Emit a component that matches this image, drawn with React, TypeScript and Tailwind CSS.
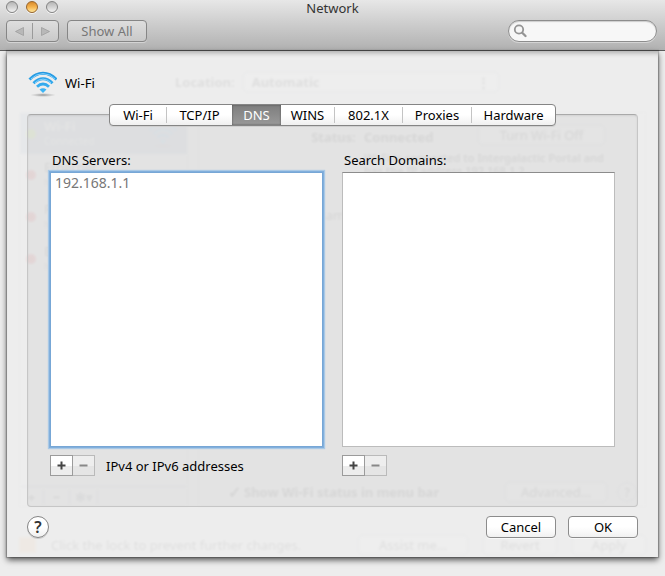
import { useState } from "react";

const tabs = [
  { name: "Wi-Fi", width: "w-[57px]" },
  { name: "TCP/IP", width: "w-[65px]" },
  { name: "DNS", width: "w-[49px]" },
  { name: "WINS", width: "w-[54px]" },
  { name: "802.1X", width: "w-[68px]" },
  { name: "Proxies", width: "w-[69px]" },
  { name: "Hardware", width: "w-[83px]" },
];

const pushButton =
  "flex h-[22px] items-center justify-center rounded border border-[#8c8c8c] bg-linear-to-b from-white from-50% to-[#f1f1f1] shadow-[0_1px_0_#f8f8f8]";

function TrafficLight({ label, active }: { label: string; active?: boolean }) {
  return (
    <button
      type="button"
      aria-label={label}
      className={
        active
          ? "size-3 rounded-full border border-[#96632b] bg-linear-to-b from-[#d98a2b] via-[#f5b44d] to-[#ffe79a] shadow-[0_1px_0_#f4f4f4]"
          : "size-3 rounded-full border border-[#838383] bg-linear-to-b from-[#b5b5b5] via-[#d2d2d2] to-[#f2f2f2] shadow-[0_1px_0_#f4f4f4]"
      }
    />
  );
}

function Toolbar() {
  return (
    <header className="h-[51px] border-b border-[#5c5c5c] bg-linear-to-b from-[#e7e7e7] to-[#b1b1b1]">
      <div className="grid h-5 grid-cols-[1fr_auto_1fr] items-start px-1.5">
        <div className="flex gap-2 pt-px">
          <TrafficLight label="Close" />
          <TrafficLight label="Minimize" active />
          <TrafficLight label="Zoom" />
        </div>
        <h1 className="leading-4 text-[#333]">Network</h1>
      </div>
      <div className="flex gap-2 pr-2 pl-1.5">
        <div className="flex h-[22px] w-[53px] items-center rounded border border-[#868686] bg-linear-to-b from-[#dedede] to-[#c9c9c9] shadow-[0_1px_0_#d4d4d4]">
          <button type="button" aria-label="Back" className="flex h-full flex-1 items-center justify-center">
            <svg width="9" height="9" viewBox="0 0 9 9">
              <path d="M8.500 .5v8L.5 4.500z" fill="#b8b8b8" stroke="#9a9a9a" strokeWidth=".7" />
            </svg>
          </button>
          <span className="h-4 w-px bg-[#9a9a9a]" />
          <button type="button" aria-label="Forward" className="flex h-full flex-1 items-center justify-center">
            <svg width="9" height="9" viewBox="0 0 9 9">
              <path d="M.5 .5v8l8-4z" fill="#b8b8b8" stroke="#9a9a9a" strokeWidth=".7" />
            </svg>
          </button>
        </div>
        <button
          type="button"
          className="flex h-[22px] w-20 items-center justify-center rounded border border-[#868686] bg-linear-to-b from-[#dedede] to-[#c9c9c9] text-[#777] shadow-[0_1px_0_#d4d4d4]"
        >
          Show All
        </button>
        <label className="ml-auto flex h-[22px] w-[149px] items-center rounded-full border border-[#8d8d8d] bg-[#f7f7f7] pl-1 shadow-[inset_0_1px_1px_#ccc,0_1px_0_#d4d4d4]">
          <svg width="14" height="14" viewBox="0 0 14 14" fill="none" stroke="#949494" className="shrink-0">
            <circle cx="6" cy="5.500" r="4.200" strokeWidth="1.800" />
            <path d="M9.200 8.700l3.300 3.300" strokeWidth="2.300" strokeLinecap="round" />
          </svg>
          <input type="search" aria-label="Search" className="w-full min-w-0 bg-transparent px-1 outline-none" />
        </label>
      </div>
    </header>
  );
}

function ServiceRow({ name, detail }: { name: string; detail: string }) {
  return (
    <li className="flex h-[42px] items-center gap-2 pr-3 pl-1.5">
      <span className="size-2.5 rounded-full bg-red-600" />
      <div className="flex-1 leading-[15px]">
        <div>{name}</div>
        <div className="text-[9px] text-gray-500">{detail}</div>
      </div>
      <span className="text-[11px]">‹··›</span>
    </li>
  );
}

function FadedButton({ label, width }: { label: string; width: string }) {
  return (
    <div className={`flex h-5 shrink-0 items-center justify-center rounded border border-gray-400 bg-white ${width}`}>
      {label}
    </div>
  );
}

function WindowBackdrop() {
  return (
    <div
      inert
      className="col-start-1 row-start-1 mx-[7px] flex flex-col overflow-hidden px-3 pt-[21px] opacity-[0.06] blur-[1px]"
    >
      <div className="flex items-center gap-2 pl-[156px]">
        <span className="font-bold">Location:</span>
        <div className="flex h-5 w-[256px] items-center justify-between rounded border border-gray-400 bg-white px-2 font-bold">
          Automatic <span>⋮</span>
        </div>
      </div>
      <div className="mt-5 flex h-[395px] gap-2.5">
        <div className="flex w-[169px] flex-col border border-gray-300">
          <div className="flex h-[41px] items-center gap-2 bg-[#8ba3c4] pr-2.5 pl-1.5 text-white">
            <span className="size-2.5 rounded-full bg-lime-400" />
            <div className="flex-1 leading-[15px]">
              <div className="font-bold">Wi-Fi</div>
              <div className="text-[10px]">Connected</div>
            </div>
            <WifiIcon />
          </div>
          <ul className="flex-1">
            <ServiceRow name="Ethernet" detail="Not Connected" />
            <ServiceRow name="FireWire" detail="Not Connected" />
            <ServiceRow name="Bluetooth PAN" detail="Not Connected" />
          </ul>
          <div className="flex h-5 items-center border-t border-gray-400 leading-4">
            <span className="w-6 border-r border-gray-400 text-center font-bold">+</span>
            <span className="w-[26px] border-r border-gray-400 text-center font-bold">−</span>
            <span className="w-7 border-r border-gray-400 text-center text-gray-600">✱▾</span>
          </div>
        </div>
        <div className="flex min-w-0 flex-1 flex-col border border-gray-300 pt-3 pr-2 pl-[29px]">
          <div className="flex items-start">
            <span className="w-[128px] pt-1 text-right font-bold">Status:</span>
            <span className="ml-2 flex-1 pt-1 font-bold">Connected</span>
            <FadedButton label="Turn Wi-Fi Off" width="mr-8 w-[127px]" />
          </div>
          <p className="mr-8 ml-[136px] pt-1.5 text-[11px] leading-[13px] font-semibold">
            Wi-Fi is connected to Intergalactic Portal and has the IP address 192.168.1.2.
          </p>
          <span className="mt-[30px] w-[128px] text-right">Network Name:</span>
          <div className="mt-auto mb-1 flex items-center">
            <span className="w-3 text-base leading-4 font-bold">✓</span>
            <span className="ml-1 flex-1 font-bold">Show Wi-Fi status in menu bar</span>
            <FadedButton label="Advanced…" width="w-[102px]" />
            <span className="ml-2.5 flex size-5 items-center justify-center rounded-full border border-gray-400">?</span>
          </div>
        </div>
      </div>
      <div className="flex items-center gap-[15px] pt-7">
        <span className="h-4 w-[17px] shrink-0 bg-orange-300" />
        <span className="flex-1 whitespace-nowrap">Click the lock to prevent further changes.</span>
        <FadedButton label="Assist me…" width="w-[110px]" />
        <FadedButton label="Revert" width="w-[74px]" />
        <FadedButton label="Apply" width="w-[74px]" />
      </div>
    </div>
  );
}

function WifiIcon() {
  return (
    <svg width="30" height="28" viewBox="0 0 30 28" fill="none">
      <defs>
        <linearGradient id="wave" x1="0" y1="0" x2="0" y2="22" gradientUnits="userSpaceOnUse">
          <stop stopColor="#1f92dc" />
          <stop offset="1" stopColor="#3db5f5" />
        </linearGradient>
        <radialGradient id="ground">
          <stop stopColor="#555" stopOpacity=".6" />
          <stop offset="1" stopColor="#888" stopOpacity="0" />
        </radialGradient>
      </defs>
      <ellipse cx="16" cy="26" rx="13" ry="2" fill="url(#ground)" />
      <g stroke="url(#wave)" strokeWidth="2.900">
        <path d="M2.500 10.500Q8.500 4.300 16 4.300T29.500 10.500" />
        <path d="M6.500 14.300Q11 9.800 16 9.800T25.500 14.300" />
        <path d="M10 17.800Q13 15 16 15T22 17.800" />
      </g>
      <g stroke="#8ed7ff" strokeWidth=".9">
        <path d="M4 10Q9.500 4.600 16 4.600T28 10" />
        <path d="M8 13.800Q11.800 10.100 16 10.100T24 13.800" />
      </g>
      <path d="M12.500 20.500Q16 18 19.500 20.500L16 24z" fill="url(#wave)" />
    </svg>
  );
}

function AddRemove({ list }: { list: string }) {
  return (
    <div className="flex h-[21px]">
      <button
        type="button"
        aria-label={`Add to ${list}`}
        className="flex w-[23px] items-center justify-center border border-[#9b9b9b] bg-linear-to-b from-white from-50% to-[#ededed] to-50%"
      >
        <svg width="9" height="9" viewBox="0 0 9 9" stroke="#444" strokeWidth="2">
          <path d="M.5 4.500h8M4.500 .5v8" />
        </svg>
      </button>
      <button
        type="button"
        aria-label={`Remove from ${list}`}
        className="flex w-[22px] items-center justify-center border border-l-0 border-[#bababa] bg-linear-to-b from-[#eee] from-50% to-[#e5e5e5] to-50%"
      >
        <svg width="9" height="9" viewBox="0 0 9 9" stroke="#888" strokeWidth="2">
          <path d="M.5 4.500h8" />
        </svg>
      </button>
    </div>
  );
}

export default function App() {
  const [selected, setSelected] = useState("DNS");

  return (
    <div className="min-h-screen bg-[#ededed] font-['Noto_Sans','Open_Sans',sans-serif] text-[13px] leading-4 text-black">
      <Toolbar />
      <main className="grid">
        <WindowBackdrop />
        <section
          aria-label="Wi-Fi settings"
          className="relative col-start-1 row-start-1 mx-[7px] px-5 pt-[18px] pb-[19px] shadow-[inset_0_6px_5px_-4px_rgba(0,0,0,0.28),0_0_1px_1px_rgba(0,0,0,0.2),0_3px_6px_rgba(0,0,0,0.65)]"
        >
          <div className="flex h-[35px] items-start gap-2">
            <WifiIcon />
            <h2 className="pt-1.5">Wi-Fi</h2>
          </div>
          <div
            role="tablist"
            className="relative mx-auto flex h-[22px] w-fit overflow-hidden rounded border border-[#858585] bg-linear-to-b from-white from-50% to-[#f0f0f0] shadow-[0_1px_0_#d0d0d0]"
          >
            {tabs.map((tab, i) => (
              <button
                key={tab.name}
                type="button"
                role="tab"
                aria-selected={selected === tab.name}
                onClick={() => setSelected(tab.name)}
                className={`flex items-center justify-center ${tab.width} ${
                  selected === tab.name
                    ? "bg-linear-to-b from-[#7e7e7e] to-[#999] text-white shadow-[inset_0_0_2px_#444]"
                    : ""
                }`}
              >
                <span
                  className={`flex h-4 w-full items-center justify-center ${
                    i < tabs.length - 1 && selected !== tab.name && tabs[i + 1].name !== selected
                      ? "border-r border-[#c4c4c4]"
                      : ""
                  }`}
                >
                  {tab.name}
                </span>
              </button>
            ))}
          </div>
          <div className="-mt-[12px] rounded border border-[#c6c6c6] border-t-[#a9a9a9] bg-black/4 px-[22px] pt-[37px] pb-[30px] shadow-[inset_0_1px_2px_rgba(0,0,0,0.08)]">
            <div className="grid grid-cols-2 gap-[19px]">
              <div>
                <label htmlFor="dns" className="block pl-0.5">
                  DNS Servers:
                </label>
                <textarea
                  id="dns"
                  defaultValue="192.168.1.1"
                  className="mt-1 block h-[275px] w-full resize-none border border-[#77a7d6] bg-white px-1 py-0.5 text-sm leading-4 text-[#777] shadow-[0_0_0_1px_#82afdc,0_0_1px_2px_#a9c9e6] outline-none"
                />
                <div className="mt-2 flex items-center gap-[11px]">
                  <AddRemove list="DNS servers" />
                  <span>IPv4 or IPv6 addresses</span>
                </div>
              </div>
              <div>
                <label htmlFor="domains" className="block pl-0.5">
                  Search Domains:
                </label>
                <textarea
                  id="domains"
                  className="mt-1 mb-2 block h-[275px] w-full resize-none border border-[#bcbcbc] border-t-[#8c8c8c] bg-white px-1 py-0.5 text-sm leading-4 text-[#777] outline-none"
                />
                <AddRemove list="search domains" />
              </div>
            </div>
          </div>
          <div className="mt-[9px] flex items-center gap-3">
            <button
              type="button"
              aria-label="Help"
              className="mr-auto flex size-[22px] items-center justify-center rounded-full border border-[#858585] bg-linear-to-b from-white from-50% to-[#efefef] text-base font-semibold text-[#333] shadow-[0_1px_0_#ccc]"
            >
              ?
            </button>
            <button type="button" className={`${pushButton} w-[70px]`}>
              Cancel
            </button>
            <button type="button" className={`${pushButton} w-[70px]`}>
              OK
            </button>
          </div>
        </section>
      </main>
    </div>
  );
}
